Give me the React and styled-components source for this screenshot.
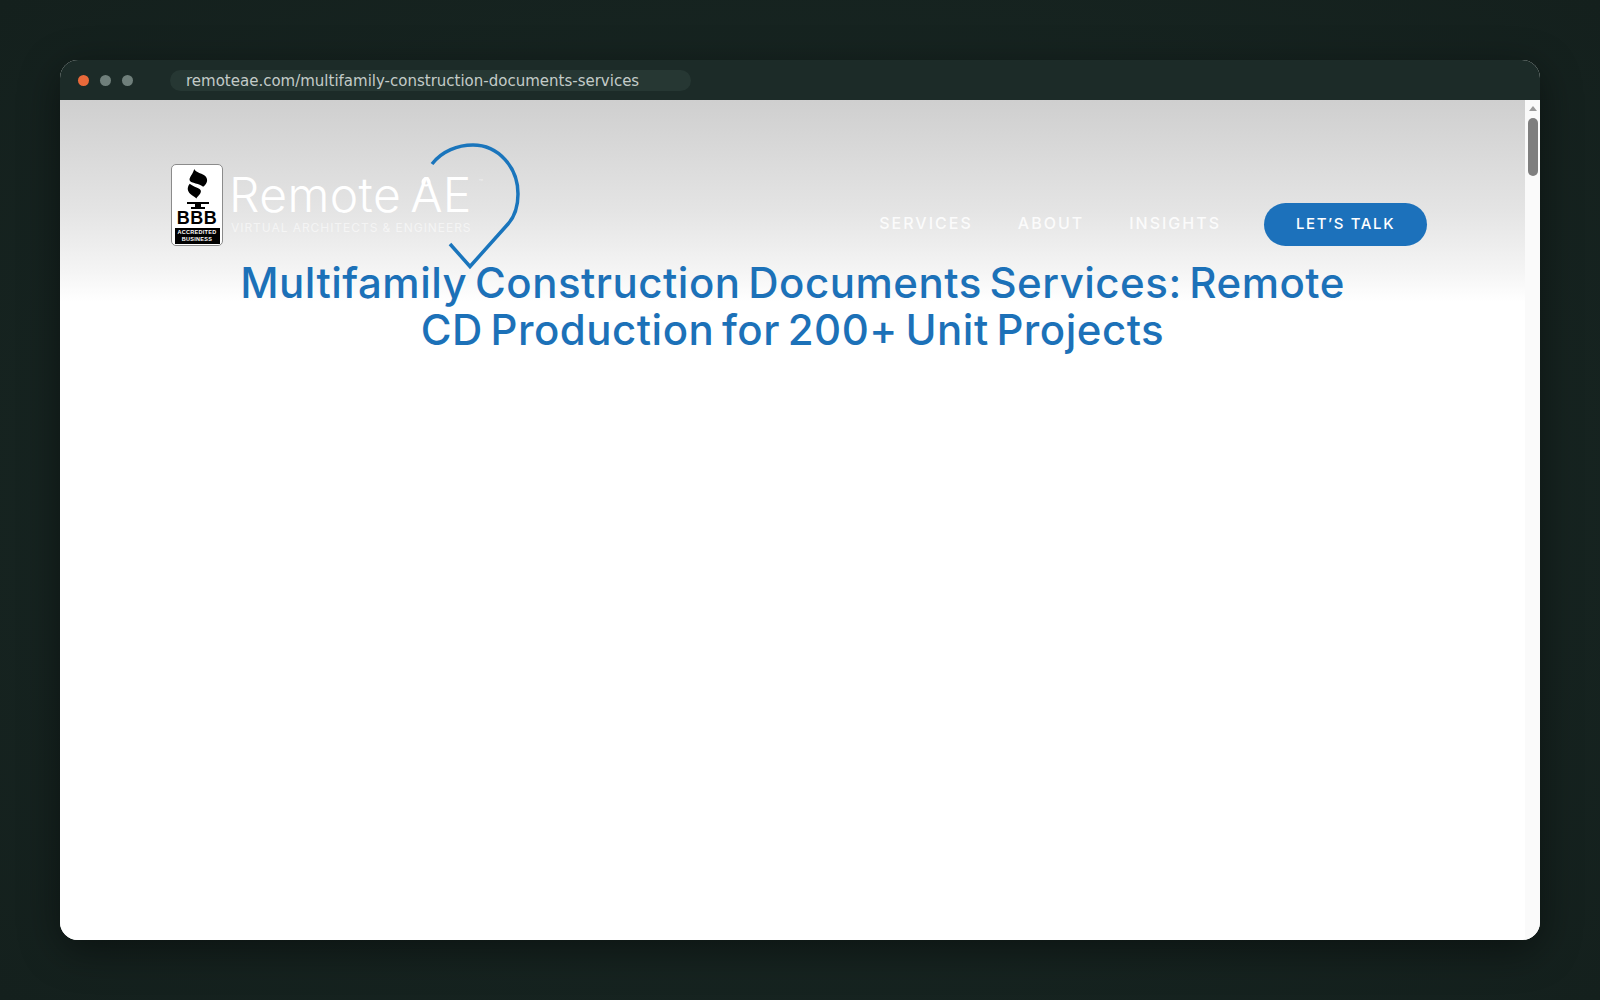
import React from "react";
import styled, { createGlobalStyle } from "styled-components";

const GlobalStyle = createGlobalStyle`
  html, body {
    margin: 0;
    height: 100%;
    background: #15211e;
    overflow: hidden;
  }
`;

const Stage = styled.div`
  width: 1600px;
  height: 1000px;
  box-sizing: border-box;
  padding: 60px;
  background: radial-gradient(ellipse at center, #1a2a26 0%, #14201d 100%);
`;

const Window = styled.div`
  height: 100%;
  display: flex;
  flex-direction: column;
  border-radius: 18px;
  overflow: hidden;
  background: #fff;
  box-shadow: 0 10px 40px rgba(0, 0, 0, 0.45);
`;

const Chrome = styled.div`
  height: 40px;
  flex: none;
  display: flex;
  align-items: center;
  padding-left: 18px;
  background: #1c2b28;
`;

const Dot = styled.span`
  width: 11px;
  height: 11px;
  border-radius: 50%;
  margin-right: 11px;
  background: ${(p) => p.$color};
`;

const UrlBar = styled.div`
  width: 521px;
  height: 21px;
  margin-left: 26px;
  box-sizing: border-box;
  padding-left: 16px;
  border-radius: 11px;
  background: #263733;
  color: #c3cbc8;
  font: 15px/23px "DejaVu Sans", sans-serif;
  white-space: nowrap;
`;

const Viewport = styled.div`
  flex: 1;
  display: flex;
  min-height: 0;
`;

const Page = styled.div`
  flex: 1;
  background: linear-gradient(#cfcfcf 0, #e4e4e4 110px, #f4f4f4 170px, #fff 202px);
`;

const Header = styled.header`
  height: 159px;
  box-sizing: border-box;
  padding: 64px 98px 0 111px;
  display: flex;
  justify-content: space-between;
  align-items: flex-start;
`;

const Brand = styled.div`
  position: relative;
  display: flex;
  align-items: flex-start;
`;

const Badge = styled.div`
  width: 52px;
  height: 82px;
  box-sizing: border-box;
  border: 1px solid #8b8b8b;
  border-radius: 5px;
  background: #fff;
  display: flex;
  flex-direction: column;
  align-items: center;
  padding-top: 4px;
  overflow: hidden;
`;

const BadgeMark = styled.div`
  color: #000;
  font: 700 18px/14px "Liberation Sans", sans-serif;
  letter-spacing: 0.5px;
`;

const BadgeCaption = styled.div`
  width: 45px;
  height: 16px;
  margin-top: 3px;
  padding-top: 1px;
  box-sizing: border-box;
  background: #000;
  color: #fff;
  text-align: center;
  font: 700 5.5px/7px "Liberation Sans", sans-serif;
  letter-spacing: 0.3px;
`;

const Wordmark = styled.div`
  margin-left: 8px;
  color: #fff;
`;

const LogoText = styled.div`
  display: flex;
  align-items: baseline;
  margin: 6px 0 0 -2px;
  font: 300 48px/50px Inter, sans-serif;
  letter-spacing: 0.4px;
  white-space: nowrap;
`;

const AeMark = styled.span`
  position: relative;
  margin-left: 9px;
  display: inline-flex;
  align-items: baseline;
`;

const AeRing = styled.svg`
  position: absolute;
  left: 10px;
  top: 6px;
`;

const Trade = styled.span`
  font-size: 7px;
  line-height: 7px;
  align-self: flex-start;
  margin: 9px 0 0 7px;
  opacity: 0.7;
`;

const Tagline = styled.div`
  margin-top: 1px;
  color: rgba(255, 255, 255, 0.55);
  font: 400 12px/14px Inter, sans-serif;
  letter-spacing: 0.95px;
  white-space: nowrap;
`;

const Pin = styled.svg`
  position: absolute;
  left: 259px;
  top: -21px;
`;

const Nav = styled.nav`
  display: flex;
  align-items: center;
  gap: 45px;
  margin-top: 39px;
`;

const NavLink = styled.a`
  margin-bottom: 3px;
  color: rgba(255, 255, 255, 0.85);
  font: 500 16px/18px Inter, sans-serif;
  letter-spacing: 2px;
`;

const TalkButton = styled.a`
  width: 163px;
  height: 43px;
  margin-left: -2px;
  border-radius: 22px;
  background: #1c71bb;
  color: #fff;
  text-align: center;
  font: 500 15px/41px Inter, sans-serif;
  letter-spacing: 1.6px;
`;

const Title = styled.h1`
  margin: 0 auto;
  width: 1200px;
  text-align: center;
  color: #1c71b8;
  font: 500 42px/47px Inter, sans-serif;
  letter-spacing: 0.5px;
  word-spacing: -4px;
`;

const Scrollbar = styled.div`
  width: 15px;
  flex: none;
  background: #fafafa;
`;

const ScrollArrow = styled.div`
  width: 0;
  height: 0;
  margin: 6px auto 0;
  border-left: 4px solid transparent;
  border-right: 4px solid transparent;
  border-bottom: 5px solid #9a9a9a;
`;

const ScrollThumb = styled.div`
  width: 10px;
  height: 58px;
  margin: 7px auto 0;
  border-radius: 5px;
  background: #7f7f7f;
`;

const App = () => {
  return (
    <>
      <GlobalStyle />
      <Stage>
        <Window>
          <Chrome>
            <Dot $color="#e9693a" />
            <Dot $color="#6f7f7b" />
            <Dot $color="#6f7f7b" />
            <UrlBar>remoteae.com/multifamily-construction-documents-services</UrlBar>
          </Chrome>
          <Viewport>
            <Page>
              <Header>
                <Brand>
                  <Badge>
                    <svg width="26" height="42" viewBox="0 0 26 42">
                      <g transform="translate(-1 0) scale(1.12 1.05)" fill="#000">
                        <path d="M10 0C9 5 5 8 6 11 7 13.500 15 14 18 17 22 14 23 9 19 6 16 4 11 3 10 0Z" />
                        <path d="M6 14C3 18 4 22 8 25 10 26.500 11 27 12 28 13 26 16 24 16 21 16 18 9 17 6 14Z" />
                      </g>
                      <path d="M3 33H25V35H3ZM11 35H17V38H11ZM7 38H21V40H7Z" fill="#000" />
                    </svg>
                    <BadgeMark>BBB</BadgeMark>
                    <BadgeCaption>
                      ACCREDITED
                      <br />
                      BUSINESS
                    </BadgeCaption>
                  </Badge>
                  <Wordmark>
                    <LogoText>
                      Remote
                      <AeMark>
                        A
                        <AeRing width="12" height="12" viewBox="0 0 12 12" fill="none">
                          <circle cx="6" cy="6" r="3.500" stroke="#fff" strokeWidth="2" />
                        </AeRing>
                        E
                      </AeMark>
                      <Trade>™</Trade>
                    </LogoText>
                    <Tagline>VIRTUAL ARCHITECTS &amp; ENGINEERS</Tagline>
                  </Wordmark>
                  <Pin width="90" height="127" viewBox="0 0 90 127" fill="none">
                    <path
                      d="M2 21C12 8 28 2 43 2 68 2 88 24 88 51 88 62 85.500 72.600 78 81L40 123.500 20 101"
                      stroke="#1a75bc"
                      strokeWidth="3.500"
                    />
                  </Pin>
                </Brand>
                <Nav>
                  <NavLink>SERVICES</NavLink>
                  <NavLink>ABOUT</NavLink>
                  <NavLink>INSIGHTS</NavLink>
                  <TalkButton>LET’S TALK</TalkButton>
                </Nav>
              </Header>
              <Title>
                Multifamily Construction Documents Services: Remote
                <br />
                CD Production for 200+ Unit Projects
              </Title>
            </Page>
            <Scrollbar>
              <ScrollArrow />
              <ScrollThumb />
            </Scrollbar>
          </Viewport>
        </Window>
      </Stage>
    </>
  );
};

export default App;
